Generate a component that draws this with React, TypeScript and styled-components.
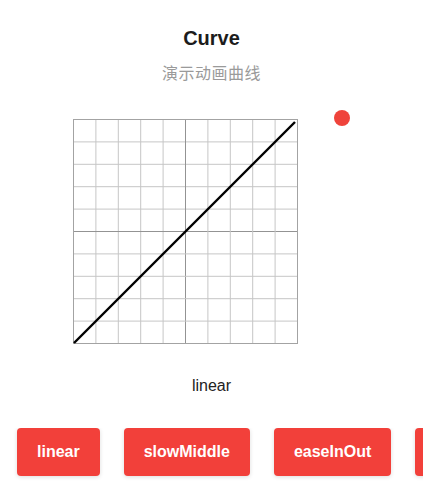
import React from "react";
import styled, { createGlobalStyle } from "styled-components";

const Global = createGlobalStyle`
  html, body { margin: 0; padding: 0; background: #ffffff; }
  body { font-family: "Liberation Sans", Arial, "Noto Sans CJK SC", sans-serif; }
`;

const Page = styled.div`
  width: 423px;
  height: 500px;
  overflow: hidden;
  display: flex;
  flex-direction: column;
  align-items: center;
  padding-top: 26px;
  box-sizing: border-box;
`;

const Title = styled.h1`
  margin: 0;
  font-size: 20px;
  line-height: 24px;
  font-weight: 700;
  color: #1c1c1c;
`;

const Subtitle = styled.div`
  margin-top: 10px;
  font-family: "Noto Sans CJK SC", sans-serif;
  font-size: 16px;
  line-height: 24px;
  color: #9a9a9a;
  letter-spacing: 0.5px;
`;

const ChartRow = styled.div`
  margin-top: 35px;
  display: flex;
  gap: 36px;
`;

const Chart = styled.svg`
  display: block;
  width: 225px;
  height: 225px;
`;

const BallTrack = styled.div`
  position: relative;
  width: 16px;
  height: 224px;
`;

const Ball = styled.div`
  position: absolute;
  left: 0;
  width: 16px;
  height: 16px;
  border-radius: 50%;
  background: #ef433b;
`;

const CurveName = styled.div`
  margin-top: 32px;
  font-size: 16px;
  line-height: 20px;
  color: #222;
`;

const ButtonRow = styled.div`
  margin-top: 32px;
  align-self: stretch;
  display: flex;
  gap: 24px;
  padding-left: 17px;
  overflow: hidden;
  white-space: nowrap;
  padding-bottom: 8px;
`;

const CurveButton = styled.button`
  flex: none;
  height: 48px;
  padding: 0 20px;
  border: none;
  border-radius: 4px;
  background: #f2403a;
  color: #ffffff;
  font-family: "Liberation Sans", Arial, sans-serif;
  font-size: 16px;
  font-weight: 700;
  box-shadow: 0 1px 4px rgba(0, 0, 0, 0.14);
  cursor: pointer;
`;

const SIZE = 224;
const CELLS = 10;

function Grid() {
  const step = SIZE / CELLS;
  const lines = [];
  for (let i = 1; i < CELLS; i++) {
    const p = 0.5 + i * step;
    const center = i === CELLS / 2;
    const color = center ? "#939393" : "#c6c6c6";
    lines.push(
      <line key={"v" + i} x1={p} y1={0.5} x2={p} y2={SIZE + 0.5} stroke={color} strokeWidth={1} />,
      <line key={"h" + i} x1={0.5} y1={p} x2={SIZE + 0.5} y2={p} stroke={color} strokeWidth={1} />
    );
  }
  return (
    <Chart viewBox={`0 0 ${SIZE + 1} ${SIZE + 1}`}>
      {lines}
      <rect x={0.5} y={0.5} width={SIZE} height={SIZE} fill="none" stroke="#a3a3a3" strokeWidth={1} />
      <line x1={1} y1={SIZE} x2={SIZE - 2} y2={3} stroke="#000" strokeWidth={2.4} strokeLinecap="butt" />
    </Chart>
  );
}

const curves = ["linear", "slowMiddle", "easeInOut", "easeIn"];

export default function App() {
  const progress = 1;
  return (
    <>
      <Global />
      <Page>
        <Title>Curve</Title>
        <Subtitle>演示动画曲线</Subtitle>
        <ChartRow>
          <Grid />
          <BallTrack>
            <Ball style={{ top: (1 - progress) * SIZE - 9 }} />
          </BallTrack>
        </ChartRow>
        <CurveName>linear</CurveName>
        <ButtonRow>
          {curves.map((c) => (
            <CurveButton key={c}>{c}</CurveButton>
          ))}
        </ButtonRow>
      </Page>
    </>
  );
}
